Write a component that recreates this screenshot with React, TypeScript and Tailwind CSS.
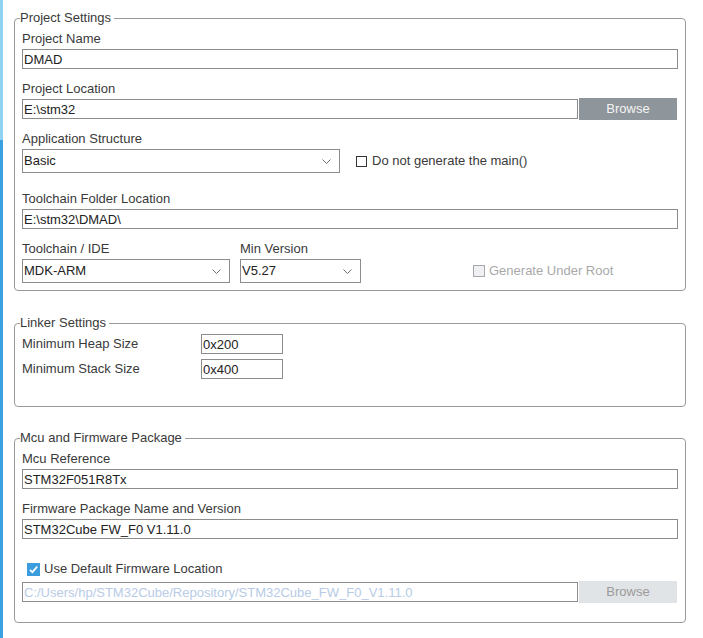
import React from 'react';

const Chevron = () => (
  <svg width="9" height="5" viewBox="0 0 9 5" fill="none">
    <path d="M0.5 0.5 L4.5 4.5 L8.5 0.5" stroke="#707070" strokeWidth="1" />
  </svg>
);

const Label = ({ children }: { children: React.ReactNode }) => (
  <div className="h-[20px] leading-[20px] text-[#3a3a3a]">{children}</div>
);

const TextBox = ({ value, className = '', disabled = false }: { value: string; className?: string; disabled?: boolean }) => (
  <input
    readOnly
    value={value}
    className={`h-[20px] border border-[#8c8c8c] bg-white px-[1px] text-[13px] outline-none ${
      disabled ? 'text-[#b7cbe6]' : 'text-[#222]'
    } ${className}`}
  />
);

const Select = ({ value, className = '' }: { value: string; className?: string }) => (
  <div className={`flex h-[24px] items-center justify-between border border-[#8c8c8c] pl-[1px] pr-[8px] text-[#222] ${className}`}>
    <span>{value}</span>
    <Chevron />
  </div>
);

const Legend = ({ children }: { children: React.ReactNode }) => (
  <legend className="-ml-[2px] pr-[3px] leading-[16px] text-[#3a3a3a]">{children}</legend>
);

export default function App() {
  return (
    <div className="flex h-[638px] w-[703px] bg-white font-['Liberation_Sans',Arial,sans-serif] text-[13px]">
      {/* left accent strip */}
      <div className="flex w-[3px] flex-col">
        <div className="h-[140px] bg-[#8fd2f1]" />
        <div className="flex-1 bg-[#3aa2e0]" />
      </div>

      <div className="ml-[11px] w-[672px] pt-[10px]">
        {/* Project Settings */}
        <fieldset className="rounded-[4px] border border-[#9a9a9a] pb-[7px] pl-[7px] pr-[7px] pt-[3px]">
          <Legend>Project Settings</Legend>
          <Label>Project Name</Label>
          <TextBox value="DMAD" className="w-full" />

          <div className="mt-[10px]">
            <Label>Project Location</Label>
          </div>
          <div className="flex h-[20px] items-center pr-[1px]">
            <TextBox value="E:\stm32" className="flex-1" />
            <button className="ml-[1px] h-[22px] w-[98px] shrink-0 bg-[#8e959b] text-[#f4f4f4]">Browse</button>
          </div>

          <div className="mt-[10px]">
            <Label>Application Structure</Label>
          </div>
          <div className="flex items-center">
            <Select value="Basic" className="w-[318px]" />
            <div className="ml-[16px] h-[11px] w-[11px] border border-[#333] bg-white" />
            <span className="ml-[5px] text-[#3a3a3a]">Do not generate the main()</span>
          </div>

          <div className="mt-[16px]">
            <Label>Toolchain Folder Location</Label>
          </div>
          <TextBox value="E:\stm32\DMAD\" className="w-full" />

          <div className="mt-[10px] flex">
            <div className="w-[218px]">
              <Label>Toolchain / IDE</Label>
            </div>
            <Label>Min Version</Label>
          </div>
          <div className="flex items-center">
            <Select value="MDK-ARM" className="w-[208px]" />
            <Select value="V5.27" className="ml-[10px] w-[121px]" />
            <div className="ml-[112px] h-[12px] w-[12px] border border-[#a8a8a8] bg-[#eef0f3]" />
            <span className="ml-[4px] text-[#a9a9a9]">Generate Under Root</span>
          </div>
        </fieldset>

        {/* Linker Settings */}
        <fieldset className="mt-[24px] rounded-[4px] border border-[#9a9a9a] pb-[27px] pl-[7px] pr-[7px] pt-[3px]">
          <Legend>Linker Settings</Legend>
          <div className="flex h-[20px] items-center">
            <span className="w-[179px] text-[#3a3a3a]">Minimum Heap Size</span>
            <TextBox value="0x200" className="w-[82px]" />
          </div>
          <div className="mt-[5px] flex h-[20px] items-center">
            <span className="w-[179px] text-[#3a3a3a]">Minimum Stack Size</span>
            <TextBox value="0x400" className="w-[82px]" />
          </div>
        </fieldset>

        {/* Mcu and Firmware Package */}
        <fieldset className="mt-[23px] rounded-[4px] border border-[#9a9a9a] pb-[20px] pl-[7px] pr-[7px] pt-[3px]">
          <Legend>Mcu and Firmware Package</Legend>
          <Label>Mcu Reference</Label>
          <TextBox value="STM32F051R8Tx" className="w-full" />

          <div className="mt-[10px]">
            <Label>Firmware Package Name and Version</Label>
          </div>
          <TextBox value="STM32Cube FW_F0 V1.11.0" className="w-full" />

          <div className="mt-[20px] flex h-[20px] items-center pl-[5px]">
            <svg width="13" height="13" viewBox="0 0 13 13">
              <rect width="13" height="13" fill="#3b9ddd" />
              <path d="M3 6.8 L5.4 9.2 L10.2 3.6" stroke="#fff" strokeWidth="1.8" fill="none" />
            </svg>
            <span className="ml-[4px] text-[#3a3a3a]">Use Default Firmware Location</span>
          </div>

          <div className="mt-[3px] flex h-[20px] items-center pr-[1px]">
            <TextBox value="C:/Users/hp/STM32Cube/Repository/STM32Cube_FW_F0_V1.11.0" className="flex-1" disabled />
            <button className="ml-[1px] h-[22px] w-[98px] shrink-0 bg-[#e1e4e7] text-[#9a9a9a]">Browse</button>
          </div>
        </fieldset>
      </div>
    </div>
  );
}
